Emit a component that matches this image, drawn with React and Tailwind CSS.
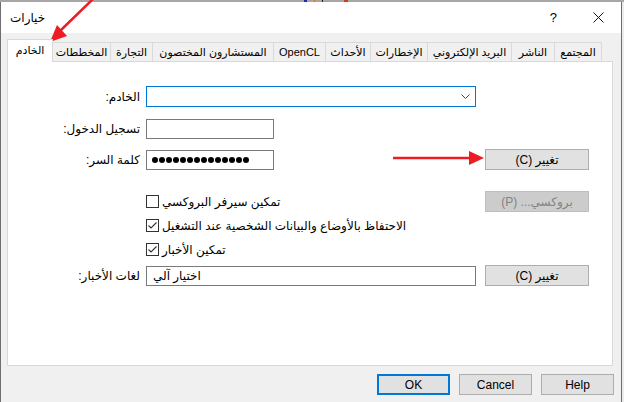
import React from "react";

const tabs = [
  { label: "الخادم", w: "w-[46px]", active: true },
  { label: "المخططات", w: "w-[58px]" },
  { label: "التجارة", w: "w-[42px]" },
  { label: "المستشارون المختصون", w: "w-[121px]" },
  { label: "OpenCL", w: "w-[52px]" },
  { label: "الأحداث", w: "w-[45px]" },
  { label: "الإخطارات", w: "w-[57px]" },
  { label: "البريد الإلكتروني", w: "w-[84px]" },
  { label: "الناشر", w: "w-[43px]" },
  { label: "المجتمع", w: "w-[47px]", last: true },
];

function Button({ children, disabled }) {
  return (
    <div
      dir="rtl"
      className={
        "w-[104px] h-[21px] flex items-center justify-center text-[12px] border " +
        (disabled
          ? "bg-[#cccccc] border-[#bfbfbf] text-[#838383]"
          : "bg-[#e1e1e1] border-[#adadad] text-black")
      }
    >
      {children}
    </div>
  );
}

function Checkbox({ checked, label }) {
  return (
    <div className="flex items-center">
      <div className="w-[13px] h-[13px] border border-[#333333] bg-white flex items-center justify-center">
        {checked && (
          <svg width="11" height="11" viewBox="0 0 11 11">
            <path d="M1.5 5.5 L4 8 L9.5 2.5" fill="none" stroke="#333333" strokeWidth="1.1" />
          </svg>
        )}
      </div>
      <span dir="rtl" className="ml-[3px] text-[12px]">{label}</span>
    </div>
  );
}

function Label({ children }) {
  return (
    <div className="w-[132px] flex justify-end">
      <span dir="rtl" className="text-[12px]">{children}</span>
    </div>
  );
}

export default function App() {
  return (
    <div className="w-[624px] h-[402px] relative overflow-hidden bg-[#ececec] text-black font-['Liberation_Sans','DejaVu_Sans',sans-serif]">
      {/* background window edge */}
      <div className="h-[2px] bg-[#a6a6a6] flex">
        <div className="w-[304px]" />
        <div className="w-[3px] bg-[#1f2ca8]" />
        <div className="w-[7px]" />
        <div className="w-[1px] bg-[#e86a1c]" />
        <div className="w-[7px]" />
        <div className="w-[1px] bg-[#222222]" />
        <div className="w-[21px]" />
        <div className="w-[4px] bg-[#d63a1e]" />
      </div>

      <div className="w-[622px] h-[400px] flex flex-col border-l border-r border-[#6f6f6f]">
        {/* title bar */}
        <div className="h-[31px] bg-white flex items-center pl-[9px] pr-[10px]">
          <span dir="rtl" className="text-[12px]">خيارات</span>
          <div className="flex-1" />
          <span className="text-[13px] mr-[36px] mt-[1px]">?</span>
          <svg width="11" height="11" viewBox="0 0 11 11" className="mr-[7px]">
            <path d="M0.5 0.5 L10.5 10.5 M10.5 0.5 L0.5 10.5" stroke="#111111" strokeWidth="1" />
          </svg>
        </div>

        {/* body */}
        <div className="flex-1 bg-[#f0f0f0] pl-[6px] flex flex-col">
          {/* tabs */}
          <div className="mt-[6px] h-[23px] flex items-end -mb-px relative z-10">
            {tabs.map((t) =>
              t.active ? (
                <div
                  key={t.label}
                  dir="rtl"
                  className={t.w + " h-[23px] bg-white border border-b-0 border-[#d9d9d9] flex items-center justify-center text-[11px] pb-[2px]"}
                >
                  {t.label}
                </div>
              ) : (
                <div
                  key={t.label}
                  dir="rtl"
                  className={
                    t.w +
                    " h-[20px] bg-[#f0f0f0] border-t border-b border-r border-[#d9d9d9] flex items-center justify-center text-[11px] whitespace-nowrap"
                  }
                >
                  {t.label}
                </div>
              )
            )}
          </div>

          {/* panel */}
          <div className="w-[606px] h-[305px] bg-white border border-[#d9d9d9] flex flex-col">
            <div className="mt-[24px] h-[21px] flex items-center">
              <Label>الخادم:</Label>
              <div className="ml-[6px] w-[330px] h-[21px] border border-[#0078d7] bg-white flex items-center justify-end pr-[5px]">
                <svg width="9" height="6" viewBox="0 0 9 6">
                  <path d="M0.5 0.5 L4.5 4.5 L8.5 0.5" fill="none" stroke="#444444" strokeWidth="1" />
                </svg>
              </div>
            </div>

            <div className="mt-[12px] h-[20px] flex items-center">
              <Label>تسجيل الدخول:</Label>
              <div className="ml-[6px] w-[128px] h-[20px] border border-[#7a7a7a] bg-white" />
            </div>

            <div className="mt-[10px] h-[21px] flex items-center">
              <Label>كلمة السر:</Label>
              <div className="ml-[6px] w-[128px] h-[20px] border border-[#7a7a7a] bg-white flex items-center pl-[5px] gap-[1px]">
                {Array.from({ length: 14 }).map((_, i) => (
                  <div key={i} className="w-[6px] h-[6px] rounded-full bg-black" />
                ))}
              </div>
              <div className="ml-[211px]">
                <Button>تغيير (C)</Button>
              </div>
            </div>

            <div className="mt-[21px] h-[21px] flex items-center">
              <div className="w-[138px]" />
              <div className="w-[339px]">
                <Checkbox label="تمكين سيرفر البروكسي" />
              </div>
              <Button disabled>بروكسي... (P)</Button>
            </div>

            <div className="mt-[3px] h-[21px] flex items-center">
              <div className="w-[138px]" />
              <Checkbox checked label="الاحتفاظ بالأوضاع والبيانات الشخصية عند التشغيل" />
            </div>

            <div className="mt-[3px] h-[21px] flex items-center">
              <div className="w-[138px]" />
              <Checkbox checked label="تمكين الأخبار" />
            </div>

            <div className="mt-[5px] h-[21px] flex items-center">
              <Label>لغات الأخبار:</Label>
              <div className="ml-[6px] w-[330px] h-[20px] border border-[#7a7a7a] bg-white flex items-center pl-[6px]">
                <span dir="rtl" className="text-[12px]">اختيار آلي</span>
              </div>
              <div className="ml-[9px]">
                <Button>تغيير (C)</Button>
              </div>
            </div>
          </div>

          {/* dialog buttons */}
          <div className="mt-[8px] flex justify-end gap-[9px] pr-[7px]">
            <div className="w-[73px] h-[21px] bg-[#e1e1e1] border-2 border-[#0078d7] flex items-center justify-center text-[12px]">
              OK
            </div>
            <div className="w-[73px] h-[21px] bg-[#e1e1e1] border border-[#adadad] flex items-center justify-center text-[12px]">
              Cancel
            </div>
            <div className="w-[73px] h-[21px] bg-[#e1e1e1] border border-[#adadad] flex items-center justify-center text-[12px]">
              Help
            </div>
          </div>
        </div>
      </div>

      {/* annotation arrows drawn over the screenshot */}
      <svg className="absolute inset-0 pointer-events-none" width="624" height="402" viewBox="0 0 624 402">
        <path d="M94 -2 L60 31" stroke="#ec1c24" strokeWidth="2.5" />
        <polygon points="50,42 57,25 67,36" fill="#ec1c24" />
        <path d="M393 158 L472 158" stroke="#ec1c24" strokeWidth="2.5" />
        <polygon points="484,158 469,151 469,165" fill="#ec1c24" />
      </svg>
    </div>
  );
}
